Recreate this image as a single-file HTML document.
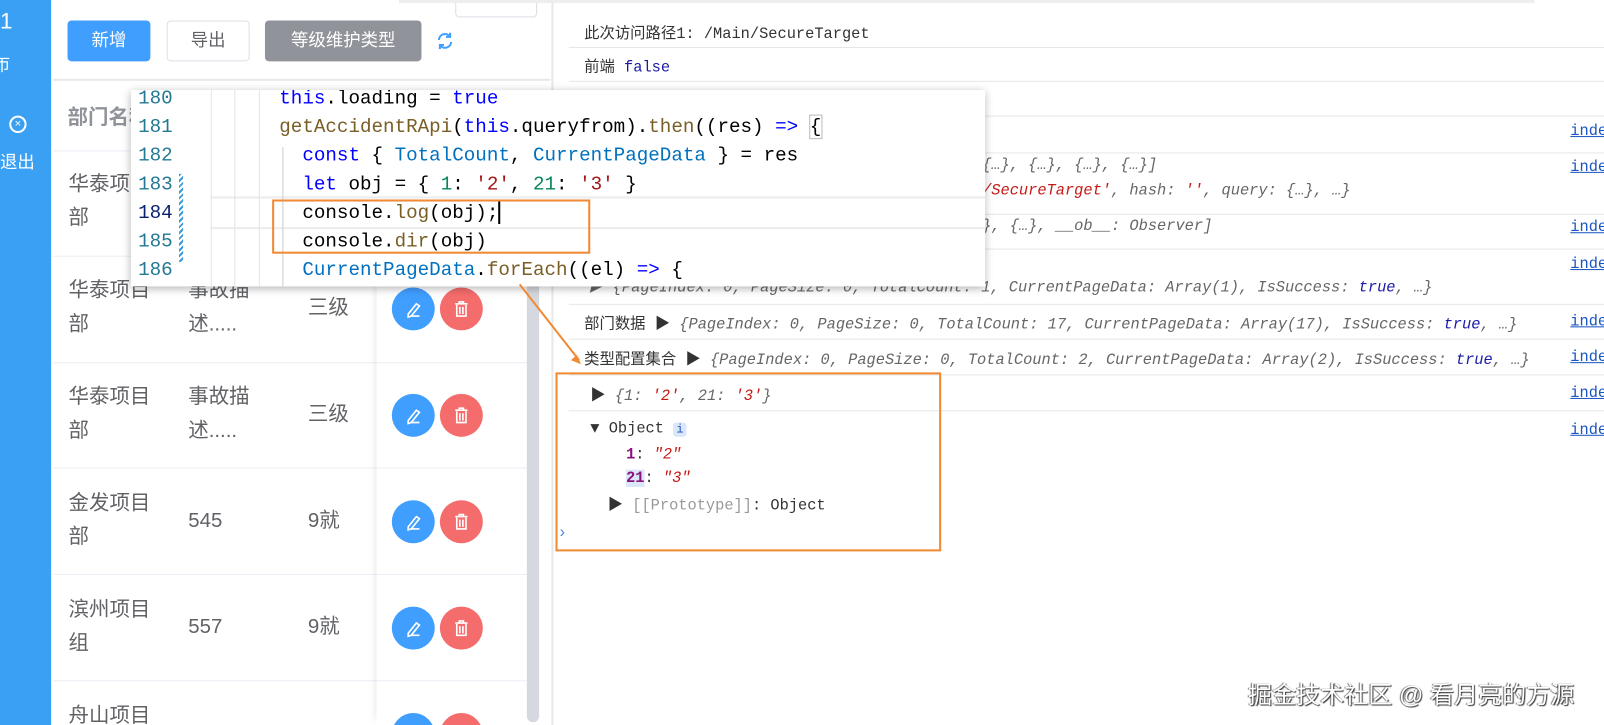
<!DOCTYPE html><html style="overflow:hidden;width:1604px;height:725px"><head><meta charset="utf-8"><style>
*{margin:0;padding:0;box-sizing:border-box}
body{width:1604px;height:725px;overflow:hidden;background:#fff;position:relative;font-family:"Liberation Sans","Noto Sans CJK SC",sans-serif}
#clip{position:absolute;left:0;top:0;width:1604px;height:725px;overflow:hidden}
#w{position:absolute;left:0;top:0;width:1568px;height:709px;transform:scale(1.023);transform-origin:0 0}
.a{position:absolute;white-space:nowrap}
.m{font-family:"Liberation Mono","Noto Sans CJK SC",monospace}
.c{font-size:15px;color:#333}
.i{font-style:italic;color:#666}
.hl{position:absolute;left:556px;right:0;height:1px;background:#e6e6e6}
.lk{position:absolute;left:1535px;font-size:15px;color:#1a55c0;text-decoration:underline;font-family:"Liberation Mono",monospace}
.row{position:absolute;left:52px;width:463px;height:1px;background:#ebeef5}
.cell{position:absolute;font-size:20px;color:#606266;line-height:33px}
.bt{position:absolute;width:42px;height:42px;border-radius:50%}
.code{font-size:18.8px;line-height:28px}
</style></head><body><div id="clip"><div id="w">
<div class="a" style="left:0;top:0;width:50px;height:709px;background:#3aa0f3"></div>
<div class="a" style="left:0;top:8px;color:#fff;font-size:22px">1</div>
<div class="a" style="left:-6px;top:50px;color:#fff;font-size:16px">帀</div>
<div class="a" style="left:9px;top:113px;width:17px;height:17px;border:2px solid #fff;border-radius:50%;color:#fff;font-size:11px;line-height:13px;text-align:center">×</div>
<div class="a" style="left:0;top:144px;color:#fff;font-size:17px">退出</div>
<div class="a" style="left:445px;top:-2px;width:80px;height:19px;border:1px solid #dcdfe6;border-radius:4px"></div>
<div class="a" style="left:66px;top:20px;width:81px;height:40px;background:#409eff;border-radius:4px;color:#fff;font-size:17px;text-align:center;line-height:40px">新增</div>
<div class="a" style="left:163px;top:20px;width:81px;height:40px;border:1px solid #dcdfe6;border-radius:4px;color:#606266;font-size:17px;text-align:center;line-height:38px">导出</div>
<div class="a" style="left:259px;top:20px;width:153px;height:40px;background:#909399;border-radius:4px;color:#fff;font-size:17px;text-align:center;line-height:40px">等级维护类型</div>
<svg class="a" style="left:426px;top:31px" width="18" height="18" viewBox="0 0 18 18"><path d="M3 8a6 6 0 0 1 11-3M15 10a6 6 0 0 1-11 3" fill="none" stroke="#409eff" stroke-width="2"/><path d="M14 1v4h-4M4 17v-4h4" fill="none" stroke="#409eff" stroke-width="2"/></svg>
<div class="a" style="left:52px;top:77px;width:486px;height:2px;background:#e8e8e8"></div>
<div class="a" style="left:66px;top:98px;font-size:20px;font-weight:bold;color:#909399">部门名称</div>
<div class="row" style="top:147px"></div><div class="row" style="top:250px"></div><div class="row" style="top:354px"></div><div class="row" style="top:457px"></div><div class="row" style="top:561px"></div><div class="row" style="top:665px"></div>
<div class="a" style="left:368px;top:148px;width:147px;height:561px;box-shadow:-6px 0 8px -6px rgba(0,0,0,.12)"></div>
<div class="cell a" style="left:67px;top:164px">华泰项目<br>部</div>
<div class="cell a" style="left:67px;top:268px">华泰项目<br>部</div><div class="cell a" style="left:184px;top:268px">事故描<br>述.....</div><div class="cell a" style="left:301px;top:285px">三级</div>
<div class="cell a" style="left:67px;top:372px">华泰项目<br>部</div><div class="cell a" style="left:184px;top:372px">事故描<br>述.....</div><div class="cell a" style="left:301px;top:389px">三级</div>
<div class="cell a" style="left:67px;top:476px">金发项目<br>部</div><div class="cell a" style="left:184px;top:493px">545</div><div class="cell a" style="left:301px;top:493px">9就</div>
<div class="cell a" style="left:67px;top:580px">滨州项目<br>组</div><div class="cell a" style="left:184px;top:597px">557</div><div class="cell a" style="left:301px;top:597px">9就</div>
<div class="cell a" style="left:67px;top:684px">舟山项目</div>
<div id="btns"></div>
<div class="a" style="left:515px;top:148px;width:12px;height:558px;background:#d5d8de;border-radius:6px"></div>
<div class="a" style="left:539px;top:0;width:2px;height:709px;background:#e8e8e8"></div>
<div class="a" style="left:390px;top:0;width:1110px;height:3px;background:#eee"></div>
<div class="hl" style="top:46px"></div><div class="hl" style="top:79px"></div><div class="hl" style="top:113px"></div><div class="hl" style="top:149px"></div><div class="hl" style="top:209px"></div><div class="hl" style="top:243px"></div><div class="hl" style="top:297px"></div><div class="hl" style="top:331px"></div><div class="hl" style="top:366px"></div><div class="hl" style="top:401px"></div>
<div class="a m c" style="left:571px;top:21px">此次访问路径1: /Main/SecureTarget</div>
<div class="a m c" style="left:571px;top:54px">前端 <span style="color:#1a1aa6">false</span></div>
<div class="a m c" style="left:571px;top:88px">上后端的路由 ...</div>
<div class="a m c i" style="left:960px;top:153px">{…}, {…}, {…}, {…}]</div>
<div class="a m c i" style="left:960px;top:178px"><span style="color:#c41a16">/SecureTarget'</span>, hash: <span style="color:#c41a16">''</span>, query: {…}, …}</div>
<div class="a m c i" style="left:960px;top:213px">}, {…}, __ob__: Observer]</div>
<div class="a m c i" style="left:575px;top:269px">▶ {PageIndex: 0, PageSize: 0, TotalCount: 1, CurrentPageData: Array(1), IsSuccess: <span style="color:#1a1aa6">true</span>, …}</div>
<div class="a m c" style="left:571px;top:305px">部门数据 ▶ <span class="i">{PageIndex: 0, PageSize: 0, TotalCount: 17, CurrentPageData: Array(17), IsSuccess: <span style="color:#1a1aa6">true</span>, …}</span></div>
<div class="a m c" style="left:571px;top:340px">类型配置集合 ▶ <span class="i">{PageIndex: 0, PageSize: 0, TotalCount: 2, CurrentPageData: Array(2), IsSuccess: <span style="color:#1a1aa6">true</span>, …}</span></div>
<div class="a m c" style="left:577px;top:375px">▶ <span class="i">{1: <span style="color:#c41a16">'2'</span>, 21: <span style="color:#c41a16">'3'</span>}</span></div>
<div class="a m c" style="left:577px;top:411px">▼ Object <span style="background:#dbe6f8;color:#1a55c0;font-size:12px;padding:0 3px;border-radius:3px">i</span></div>
<div class="a m c" style="left:612px;top:436px"><b style="color:#881280">1</b>: <span style="color:#c41a16;font-style:italic">"2"</span></div>
<div class="a m c" style="left:612px;top:459px"><b style="color:#881280;background:#dbe6f8">21</b>: <span style="color:#c41a16;font-style:italic">"3"</span></div>
<div class="a m c" style="left:594px;top:482px">▶ <span style="color:#999">[[Prototype]]</span>: Object</div>
<div class="a" style="left:547px;top:512px;color:#4a8ae6;font-size:16px">›</div>
<div class="a" style="left:543px;top:364px;width:377px;height:175px;border:2.5px solid #f08a35"></div>
<div class="lk" style="top:120px">inde</div><div class="lk" style="top:155px">inde</div><div class="lk" style="top:214px">inde</div><div class="lk" style="top:250px">inde</div><div class="lk" style="top:306px">inde</div><div class="lk" style="top:341px">inde</div><div class="lk" style="top:376px">inde</div><div class="lk" style="top:412px">inde</div>
<div class="a" style="left:128px;top:88px;width:835px;height:192px;background:#fff;box-shadow:0 2px 8px rgba(0,0,0,.3);overflow:hidden">
 <div class="a" style="left:78px;top:104px;width:757px;height:2px;background:#ececec"></div>
 <div class="a" style="left:78px;top:134px;width:757px;height:2px;background:#ececec"></div>
 <div class="a" style="left:78px;top:0;width:1px;height:192px;background:#e4e4e4"></div>
 <div class="a" style="left:101px;top:0;width:1px;height:192px;background:#e4e4e4"></div>
 <div class="a" style="left:125px;top:0;width:1px;height:192px;background:#e4e4e4"></div>
 <div class="a" style="left:148px;top:56px;width:1px;height:136px;background:#ccc"></div>
 <div class="a" style="left:47px;top:82px;width:4px;height:86px;background:repeating-linear-gradient(135deg,#3a9ad9 0 2px,#fff 2px 4px)"></div>
 <div class="a m code" style="left:7px;top:-6px;color:#237893">180<br>181<br>182<br>183<br><span style="color:#0b216f">184</span><br>185<br>186</div>
 <div class="a m code" style="left:145px;top:-6px;color:#000"><span style="color:#0000ff">this</span>.loading = <span style="color:#0000ff">true</span><br><span style="color:#795e26">getAccidentRApi</span>(<span style="color:#0000ff">this</span>.queryfrom).<span style="color:#795e26">then</span>((res) <span style="color:#0000ff">=&gt;</span> <span style="outline:1px solid #bbb">{</span><br>&nbsp;&nbsp;<span style="color:#0000ff">const</span> { <span style="color:#0070c1">TotalCount</span>, <span style="color:#0070c1">CurrentPageData</span> } = res<br>&nbsp;&nbsp;<span style="color:#0000ff">let</span> obj = { <span style="color:#098658">1</span>: <span style="color:#a31515">'2'</span>, <span style="color:#098658">21</span>: <span style="color:#a31515">'3'</span> }<br>&nbsp;&nbsp;console.<span style="color:#795e26">log</span>(obj);<span style="border-left:2px solid #000"></span><br>&nbsp;&nbsp;console.<span style="color:#795e26">dir</span>(obj)<br>&nbsp;&nbsp;<span style="color:#0070c1">CurrentPageData</span>.<span style="color:#795e26">forEach</span>((el) <span style="color:#0000ff">=&gt;</span> {</div>
</div>
<div class="a" style="left:266px;top:195px;width:311px;height:53px;border:2.5px solid #f08a35"></div>
<svg class="a" style="left:0;top:0" width="1568" height="709"><line x1="508" y1="278" x2="566" y2="352" stroke="#f08a35" stroke-width="2"/><path d="M568 356 l-10 -4 l6 -5z" fill="#f08a35"/></svg>
<div class="a" style="left:1220px;top:660px;font-size:23.5px;color:#fff;text-shadow:1px 1px 1px #333,-1px 0 1px #666">掘金技术社区 @ 看月亮的方源</div>
</div></div>
<script>
var ys=[281,385,489,593,697],h='';ys.forEach(function(y){h+='<div class="bt" style="left:383px;top:'+y+'px;background:#409eff"><svg width="42" height="42"><path d="M16 26l8-10 3 2-8 10-3 1z M18 28h9" fill="none" stroke="#fff" stroke-width="1.6"/></svg></div><div class="bt" style="left:430px;top:'+y+'px;background:#f56c6c"><svg width="42" height="42"><path d="M15 16h12M19 16v-2h4v2M16.5 17v11h9v-11M19.5 19v7M22.5 19v7" fill="none" stroke="#fff" stroke-width="1.6"/></svg></div>'});document.getElementById('btns').innerHTML=h;
</script>
</body></html>
